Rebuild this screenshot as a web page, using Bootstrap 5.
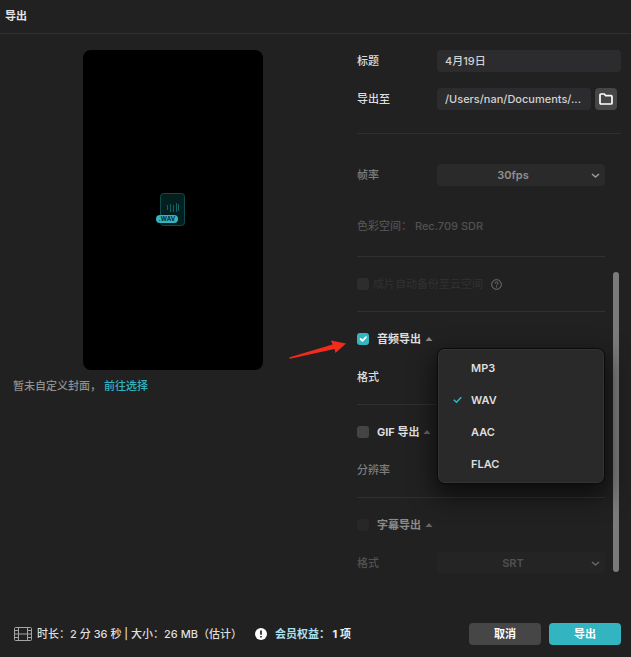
<!DOCTYPE html>
<html lang="zh-CN" data-bs-theme="dark">
<head>
<meta charset="utf-8">
<meta name="viewport" content="width=device-width, initial-scale=1">
<title>导出</title>
<link href="https://cdn.jsdelivr.net/npm/bootstrap@5.3.0/dist/css/bootstrap.min.css" rel="stylesheet">
<style>
  body { background: #212121; color: #dedede; font: 500 11px/22px Inter, "Noto Sans CJK SC", sans-serif; }
  .title-bar { padding: 5px; border-bottom: 1px solid #303030; height: 34px; color: #e4e4e4; }
  .panes { display: grid; grid-template-columns: 320fr 264fr; gap: 24px; padding: 16px 10px 0 13px; }
  .preview { width: 180px; height: 320px; border-radius: 8px; background: #000; }
  .wav-icon { margin-right: 4px; }
  .cover-note { color: #8f8f8f; margin-top: 5px; }
  .teal { color: #32b3c0; }
  .field-row { display: grid; grid-template-columns: 80px minmax(0, 1fr); height: 22px; }
  .field { height: 22px; padding: 0 8px; border: 0; border-radius: 4px; background: #2c2c2e; color: #d2d2d2; font: inherit; min-width: 0; text-overflow: ellipsis; }
  .folder-btn { flex: none; width: 22px; height: 22px; border-radius: 4px; background: #464646; margin: 0 4px; }
  .first-part { padding: 30px 0 19px; gap: 29px; }
  .part { border-top: 1px solid #303030; padding: 16px 0; gap: 16px; }
  .scroll-area { border-top: 1px solid #303030; margin-top: 23px; }
  .scroll-thumb { width: 6px; height: 300px; margin: 138px 2px 0 8px; border-radius: 3px; background: #7b7b7b; }
  .picker { appearance: none; width: 100%; padding: 0 24px 0 8px; text-align-last: center; background: #2a2a2a; color: #8f8f8f; font-weight: 600; }
  .picker:disabled { background: #242424; color: #515151; opacity: 1; }
  .chevron { right: 5px; top: 7px; pointer-events: none; }
  .tick { width: 12px; height: 12px; margin: 0 8px 0 0; border: 0; border-radius: 3px !important; background-color: #444; flex: none; }
  .tick:checked { background-color: #35b5c1; }
  .tick:disabled { background-color: #2d2d2d; opacity: 1; margin-right: 4px; }
  .tick.faint-tick { background-color: #272727; }
  .heading { height: 22px; font-weight: 700; }
  .t-mid { color: #7d7d7d; }
  .t-dim { color: #515151; }
  .t-faint { color: #313131; }
  .t-half { color: #8b8b8b; }
  .format-menu { display: block; top: -17px; left: 1px; right: 1px; min-width: 0; padding: 2px 0; border: 1px solid #333; border-radius: 6px; background: #292929; outline: 1px solid #0b0b0b; box-shadow: 0 10px 24px 4px rgba(0, 0, 0, .6); font-size: 11px; }
  .format-item { display: flex; align-items: center; height: 32px; padding: 0 14px; line-height: 22px; color: #dedede; font-weight: 600; }
  .format-mark { width: 18px; }
  .pointer-arrow { left: -69px; top: 10px; pointer-events: none; }
  .bottom-bar { padding: 0 10px 12px 14px; }
  .stats { margin: 0 13px 0 5px; }
  .action { width: 72px; height: 22px; padding: 0; border: 0; border-radius: 4px; font: inherit; font-weight: 700; color: #fff; background: #464646; }
  .action:hover { color: #fff; background: #505050; }
  .primary-action, .primary-action:hover { background: #32b5c1; }
  .benefit { font-weight: 700; color: #e3f0f4; }
  .benefit-name { color: #a9dfec; }
</style>
<script src="https://cdn.jsdelivr.net/npm/bootstrap@5.3.0/dist/js/bootstrap.bundle.min.js"></script>
</head>
<body class="d-flex flex-column min-vh-100">
<header class="title-bar fw-bold">导出</header>

<main class="panes flex-grow-1">
  <section>
    <div class="preview mx-auto d-flex align-items-center justify-content-center">
      <svg class="wav-icon" width="30" height="34" viewBox="0 0 30 34" role="img" aria-label="WAV">
        <rect x="4.500" y=".5" width="24" height="32" rx="3" fill="#03201f" stroke="#0f4b4d"/>
        <path d="M11.500 12v5M14.500 11v8M17.500 12v7M20.500 10v9M22.500 11v7" stroke="#146064" fill="none"/>
        <rect x="0" y="22" width="22" height="8" rx="4" fill="#36b5c1"/>
        <text x="11" y="28" text-anchor="middle" font-family="Inter, sans-serif" font-size="6" font-weight="700" fill="#06282b">.WAV</text>
      </svg>
    </div>
    <div class="cover-note">暂未自定义封面， <a href="#" class="teal text-decoration-none">前往选择</a></div>
  </section>

  <form id="export-form">
    <div class="field-row">
      <label for="name">标题</label>
      <input class="field" id="name" value="4月19日">
    </div>
    <div class="field-row mt-3">
      <label for="path">导出至</label>
      <div class="d-flex">
        <input class="field flex-grow-1" id="path" value="/Users/nan/Documents/..." readonly>
        <button type="button" class="folder-btn btn p-0 border-0 d-flex align-items-center justify-content-center" aria-label="选择文件夹">
          <svg width="14" height="12" viewBox="0 0 14 12" fill="none" stroke="#fff" stroke-width="1.700" stroke-linejoin="round"><path d="M2 1h3.300l1.400 1.700H12q1 0 1 1V10q0 1-1 1H2q-1 0-1-1V2q0-1 1-1z"/></svg>
        </button>
      </div>
    </div>

    <div class="scroll-area d-flex">
      <div class="flex-grow-1">
        <div class="first-part d-flex flex-column">
          <div class="field-row">
            <label for="fps" class="t-mid">帧率</label>
            <div class="position-relative">
              <select class="field picker d-block" id="fps"><option>30fps</option></select>
              <svg class="chevron position-absolute" width="9" height="9" viewBox="0 0 9 9" fill="none" stroke="#9a9a9a" stroke-width="1.600"><path d="M1 3l3.500 3L8 3"/></svg>
            </div>
          </div>
          <div class="t-dim">色彩空间： Rec.709 SDR</div>
        </div>

        <div class="part d-flex flex-column">
          <div class="heading d-flex align-items-center fw-normal">
            <input class="form-check-input tick" type="checkbox" id="backup" disabled>
            <label for="backup" class="t-faint">成片自动备份至云空间</label>
            <svg class="ms-2" width="11" height="11" viewBox="0 0 11 11" fill="none" stroke="#777"><circle cx="5.500" cy="5.500" r="4.800"/><path d="M4 4.500c0-2 3-2 3-.1C7 5.400 5.500 5.300 5.500 6.500M5.500 7.400v1"/></svg>
          </div>
        </div>

        <div class="part d-flex flex-column">
          <div class="heading d-flex align-items-center position-relative">
            <input class="form-check-input tick" type="checkbox" id="audio" checked>
            <label for="audio">音频导出</label>
            <svg class="ms-1" width="8" height="6" viewBox="0 0 8 6"><path d="M.5 5L4 1l3.500 4z" fill="#888"/></svg>
            <svg class="pointer-arrow position-absolute" width="60" height="22" viewBox="0 0 60 22"><path d="M1 19.500L44.500 6.500 43 2.500 58 5.500 47.500 15 46.500 11 2 20.800z" fill="#f32b1c"/></svg>
          </div>
          <div class="field-row">
            <span>格式</span>
            <div class="position-relative">
              <div class="dropdown-menu format-menu show" role="listbox" aria-label="格式">
                <button type="button" role="option" class="dropdown-item format-item"><span class="format-mark"></span>MP3</button>
                <button type="button" role="option" aria-selected="true" class="dropdown-item format-item"><span class="format-mark d-flex"><svg width="9" height="8" viewBox="0 0 9 8" fill="none" stroke="#35b8c5" stroke-width="1.500"><path d="M.8 3.800l2.700 2.500L8.200 1.300"/></svg></span>WAV</button>
                <button type="button" role="option" class="dropdown-item format-item"><span class="format-mark"></span>AAC</button>
                <button type="button" role="option" class="dropdown-item format-item"><span class="format-mark"></span>FLAC</button>
              </div>
            </div>
          </div>
        </div>

        <div class="part d-flex flex-column">
          <div class="heading d-flex align-items-center">
            <input class="form-check-input tick" type="checkbox" id="gif">
            <label for="gif">GIF 导出</label>
            <svg class="ms-1" width="8" height="6" viewBox="0 0 8 6"><path d="M.5 5L4 1l3.500 4z" fill="#666"/></svg>
          </div>
          <div class="t-mid">分辨率</div>
        </div>

        <div class="part d-flex flex-column pb-0">
          <div class="heading d-flex align-items-center t-half">
            <input class="form-check-input tick faint-tick" type="checkbox" id="subs">
            <label for="subs">字幕导出</label>
            <svg class="ms-1" width="8" height="6" viewBox="0 0 8 6"><path d="M.5 5L4 1l3.500 4z" fill="#666"/></svg>
          </div>
          <div class="field-row">
            <label for="subfmt" class="t-dim">格式</label>
            <div class="position-relative">
              <select class="field picker d-block" id="subfmt" disabled><option>SRT</option></select>
              <svg class="chevron position-absolute" width="9" height="9" viewBox="0 0 9 9" fill="none" stroke="#666" stroke-width="1.600"><path d="M1 3l3.500 3L8 3"/></svg>
            </div>
          </div>
        </div>
      </div>
      <div class="scroll-thumb flex-shrink-0"></div>
    </div>
  </form>
</main>

<footer class="bottom-bar d-flex align-items-center">
  <svg width="18" height="14" viewBox="0 0 18 14" fill="none" stroke="#a5a5a5"><rect x=".5" y=".5" width="17" height="13" rx="1"/><path d="M4.500.5v13M13.500.5v13M4.500 7h9M.5 3.500h4M.5 7h4M.5 10.500h4M13.500 3.500h4M13.500 7h4M13.500 10.500h4"/></svg>
  <span class="stats">时长：2 分 36 秒 | 大小：26 MB（估计）</span>
  <svg class="me-2" width="12" height="12" viewBox="0 0 12 12"><circle cx="6" cy="6" r="6" fill="#fff"/><path d="M6 2.500v4.300M6 8v1.600" stroke="#212121" stroke-width="1.700"/></svg>
  <span class="benefit"><span class="benefit-name">会员权益：</span> 1 项</span>
  <div class="d-flex gap-2 ms-auto">
    <button type="button" class="btn action">取消</button>
    <button type="submit" form="export-form" class="btn action primary-action">导出</button>
  </div>
</footer>
</body>
</html>
